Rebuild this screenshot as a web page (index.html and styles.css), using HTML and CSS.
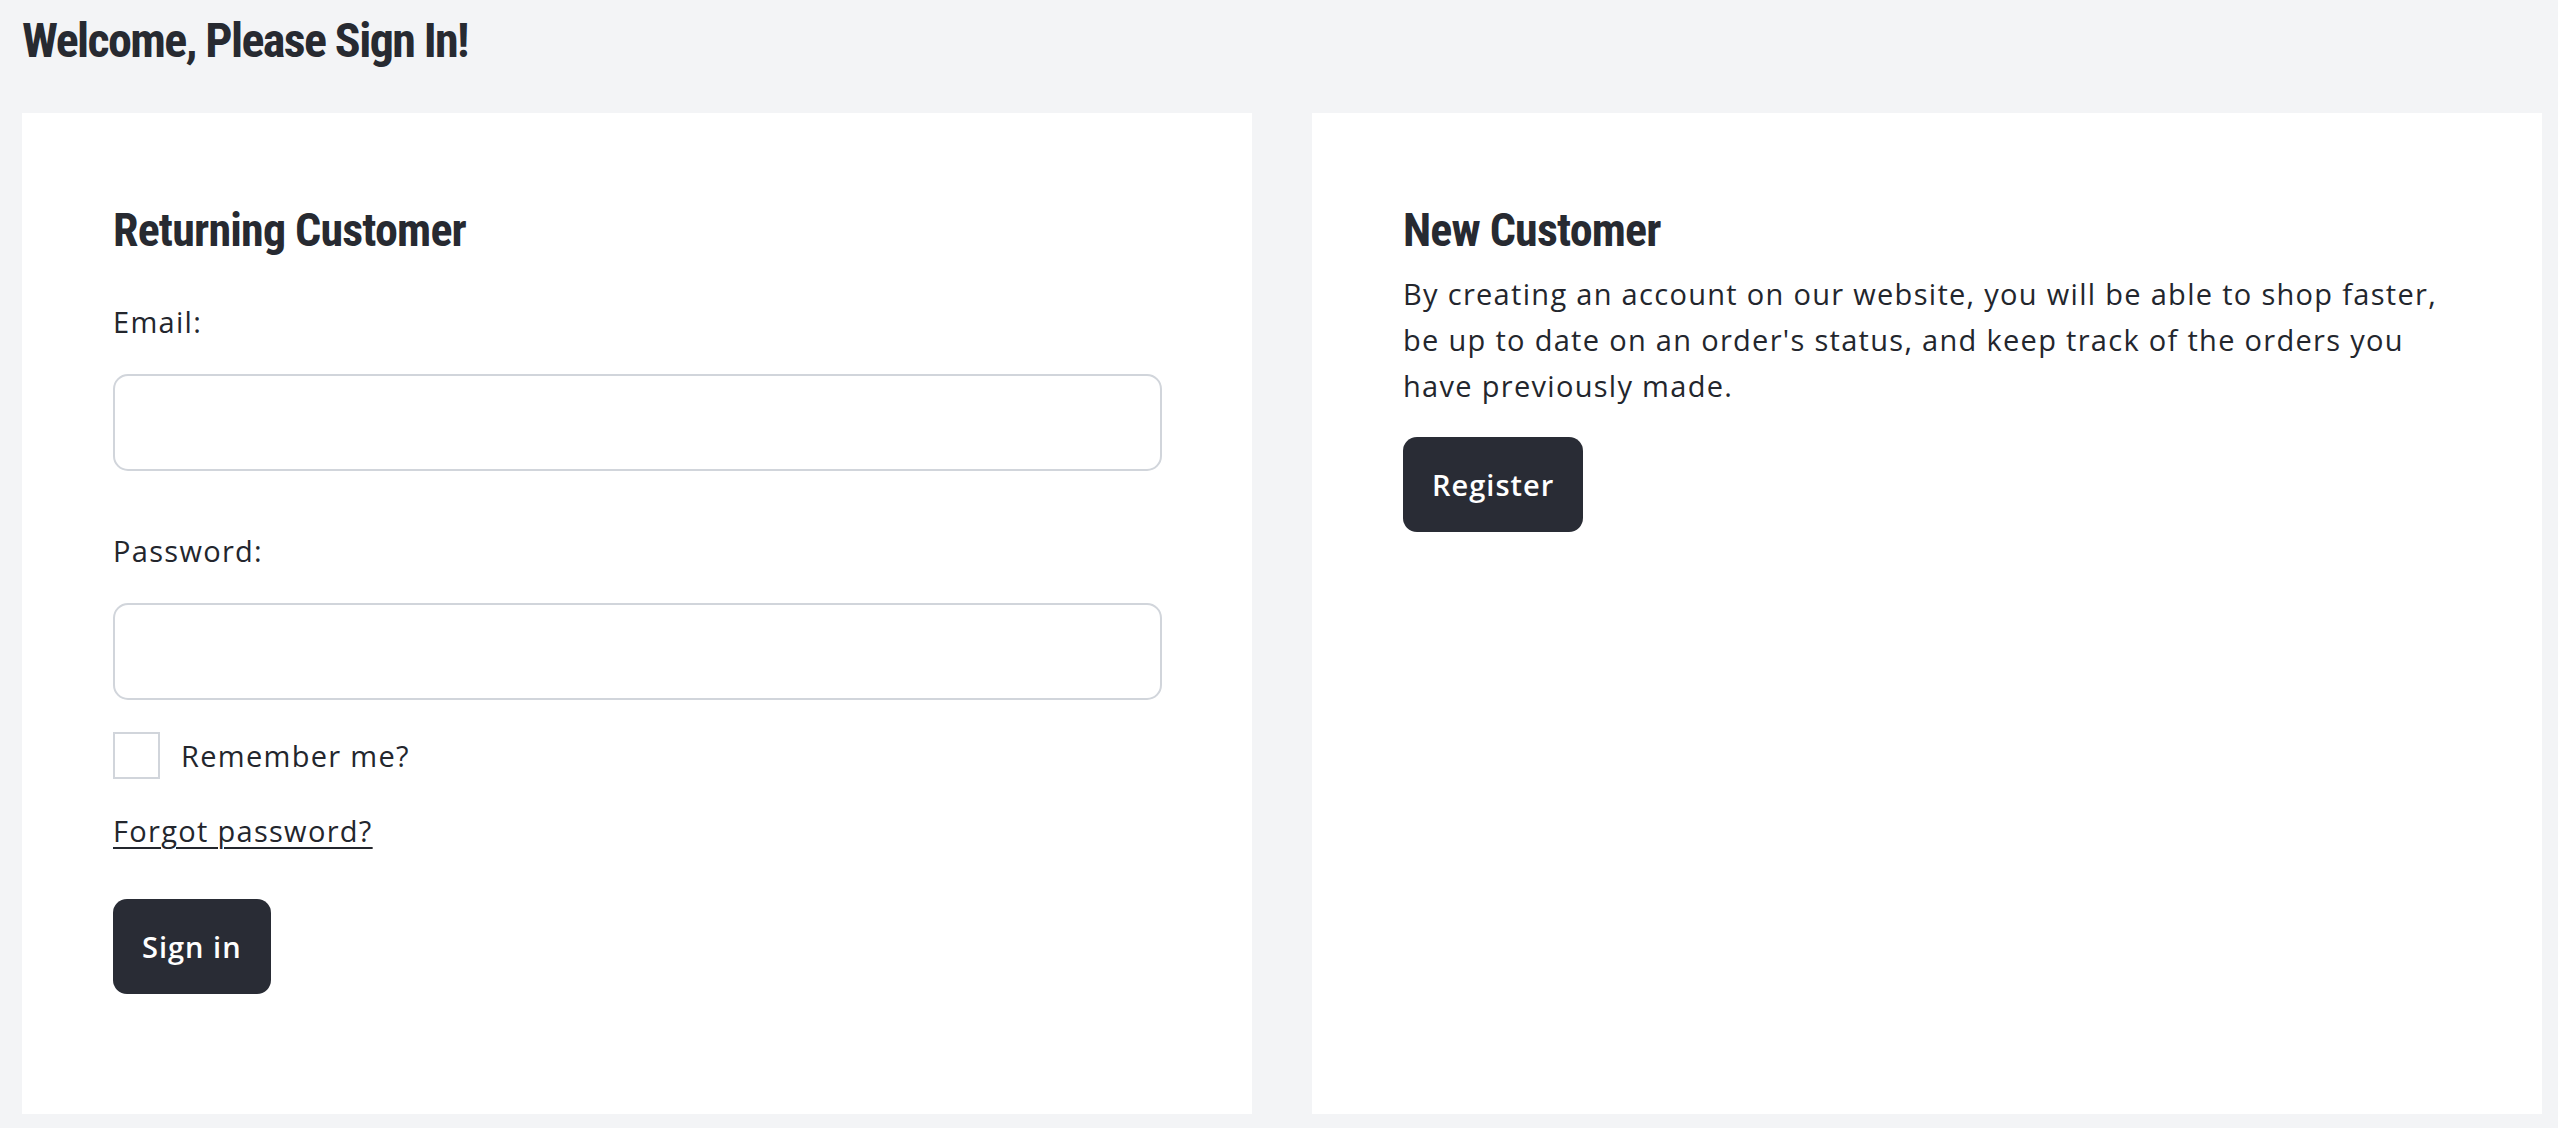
FILE: index.html
```html
<!DOCTYPE html>
<html lang="en">
<head>
    <meta charset="UTF-8">
    <meta name="viewport" content="width=device-width, initial-scale=1.0">
    <title>Sign In</title>
    <link rel="stylesheet" href="styles.css">
</head>
<body>
    <div class="page">
        <h1 class="page-title">Welcome, Please Sign In!</h1>

        <div class="columns">
            <div class="panel">
                <h2 class="panel-title">Returning Customer</h2>
                <form class="login-form">
                    <div class="field">
                        <label for="email">Email:</label>
                        <input type="email" id="email">
                    </div>
                    <div class="field">
                        <label for="password">Password:</label>
                        <input type="password" id="password">
                    </div>
                    <label class="remember">
                        <input type="checkbox">
                        <span>Remember me?</span>
                    </label>
                    <a href="#" class="forgot">Forgot password?</a>
                    <div class="actions">
                        <button type="submit" class="btn">Sign in</button>
                    </div>
                </form>
            </div>

            <div class="panel">
                <h2 class="panel-title">New Customer</h2>
                <p class="intro">By creating an account on our website, you will be able to shop faster, be up to date on an order's status, and keep track of the orders you have previously made.</p>
                <button type="button" class="btn">Register</button>
            </div>
        </div>
    </div>
</body>
</html>
```

FILE: styles.css
```css
body {
    margin: 0;
    padding: 0;
    background-color: #f3f4f6;
    color: #23262d;
    font-family: "Open Sans", Arial, sans-serif;
    letter-spacing: 1.3px;
}

.page {
    padding: 13px 16px 13px 22px;
}

.page-title {
    margin: 0 0 44px 0;
    font-family: "Roboto Condensed", Roboto, sans-serif;
    font-size: 48px;
    line-height: 56px;
    font-weight: 700;
    letter-spacing: -1.6px;
    color: #272a31;
}

.columns {
    display: grid;
    grid-template-columns: 1fr 1fr;
    gap: 60px;
}

.panel {
    background: #fff;
    padding: 90px 90px 120px 91px;
}

.panel-title {
    margin: 0;
    font-family: "Roboto Condensed", Roboto, sans-serif;
    font-size: 46px;
    line-height: 54px;
    font-weight: 700;
    letter-spacing: -0.8px;
    color: #272a31;
}

.login-form {
    margin-top: 43px;
    font-size: 29px;
    line-height: 44px;
}

.field {
    margin-bottom: 32px;
}

.field + .field {
    margin-top: 58px;
}

.field label {
    display: block;
    margin-bottom: 30px;
}

.field input {
    display: block;
    box-sizing: border-box;
    width: 100%;
    height: 97px;
    border: 2px solid #d1d5db;
    border-radius: 15px;
    padding: 0 24px;
    font: inherit;
    background: #fff;
}

.remember {
    display: flex;
    align-items: center;
    gap: 21px;
}

.remember input {
    appearance: none;
    margin: 0;
    width: 47px;
    height: 47px;
    border: 2px solid #d1d5db;
    background: #fff;
}

.forgot {
    display: inline-block;
    margin-top: 30px;
    color: #23262d;
    text-decoration: underline;
    text-decoration-thickness: 2px;
    text-underline-offset: 5px;
}

.actions {
    margin-top: 46px;
}

.intro {
    margin: 14px 0 28px;
    font-size: 29px;
    line-height: 46px;
}

.btn {
    padding: 25px 29px;
    border: none;
    border-radius: 14px;
    background: #292c35;
    color: #fff;
    font-family: "Open Sans", Arial, sans-serif;
    font-size: 29px;
    line-height: 45px;
    font-weight: 600;
    letter-spacing: 1px;
    cursor: pointer;
}

.btn:hover {
    background: #1c1e24;
}
```
